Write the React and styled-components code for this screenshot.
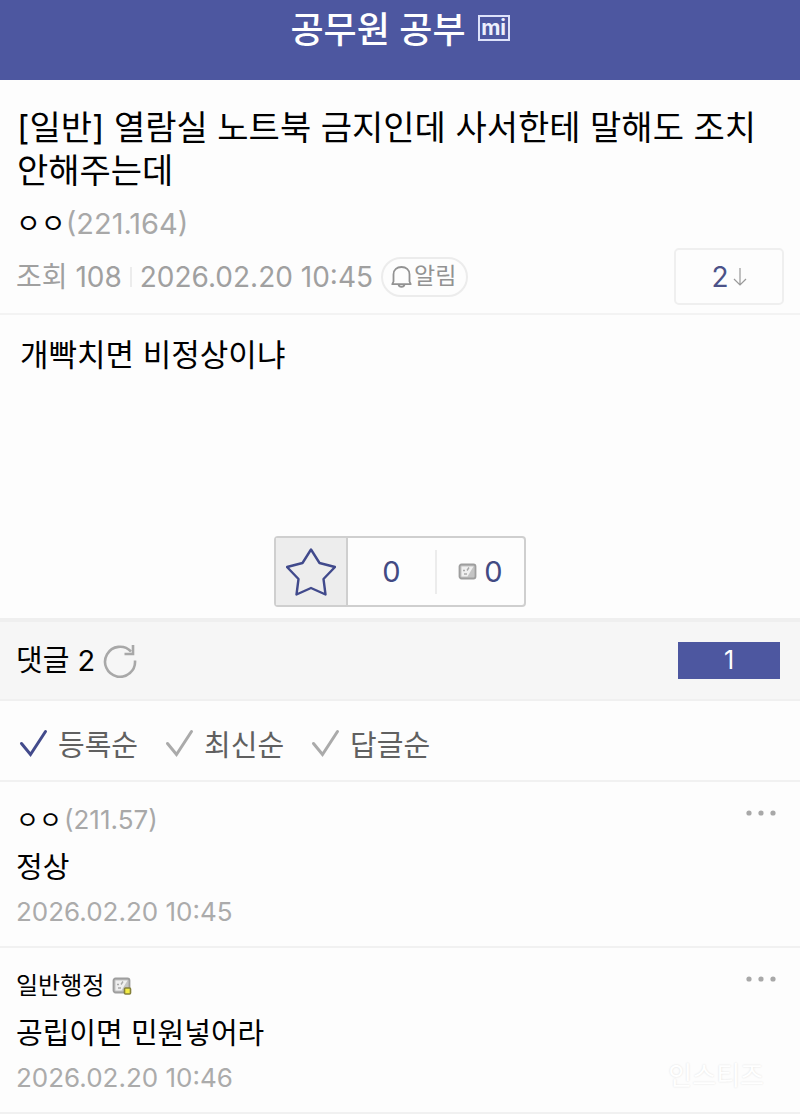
import React, {useState} from 'react'
import styled, {createGlobalStyle} from 'styled-components'

const GlobalStyle = createGlobalStyle`
  * { box-sizing: border-box; }

  body {
    margin: 0;
    background: #fdfdfd;
    color: #000;
    font-family: Inter, 'Noto Sans CJK KR', sans-serif;
  }

  button {
    margin: 0;
    padding: 0;
    border: 0;
    background: none;
    color: inherit;
    font: inherit;
    cursor: pointer;
  }

  h1, h2, p, ul { margin: 0; padding: 0; font-weight: 400; }

  a { color: inherit; text-decoration: none; }

  svg { display: block; flex: none; }
`

const Page = styled.div`
  position: relative;
  line-height: 1;
`

const TopBar = styled.header`
  display: flex;
  justify-content: center;
  align-items: center;
  gap: 12px;
  height: 80px;
  padding-bottom: 24px;
  background: #4d57a0;
  color: #fff;
`

const BoardName = styled.a`
  padding-top: 4px;
  font-size: 36px;
  font-weight: 500;
`

const MinorMark = styled.span`
  display: flex;
  justify-content: center;
  width: 32px;
  height: 26px;
  border: 2px solid #dde2fa;
  color: #eceffd;
  font-size: 21px;
  font-weight: 700;
  line-height: 22px;
`

const PostHead = styled.div`
  padding: 26px 16px 8px;
  border-bottom: 2px solid #f3f3f3;
`

const Title = styled.h1`
  padding-left: 1px;
  font-size: 34px;
  line-height: 43px;
`

const Writer = styled.div`
  display: flex;
  align-items: center;
  gap: ${p => p.$gap || 0}px;
  font-size: ${p => p.$size}px;
  line-height: 36px;
`

const PostWriter = styled(Writer)`padding: 14px 0 6px;`

const Ip = styled.span`
  color: #a8a8a8;
  font-size: ${p => p.$size}px;
`

const MetaRow = styled.div`
  display: flex;
  justify-content: space-between;
  align-items: center;
`

const Meta = styled.div`
  display: flex;
  align-items: center;
  gap: 8px;
  color: #a0a0a0;
  font-size: 28px;
`

const Bar = styled.span`
  width: 2px;
  height: ${p => p.$height}px;
  background: #ececec;
`

const AlarmButton = styled.button`
  display: flex;
  align-items: center;
  gap: 2px;
  height: 40px;
  padding: 0 10px 0 8px;
  border: 2px solid #ececec;
  border-radius: 20px;
  color: #929292;
  font-size: 23px;
`

const ReplyJump = styled.a`
  display: flex;
  justify-content: center;
  align-items: center;
  gap: 4px;
  width: 110px;
  height: 57px;
  border: 2px solid #efefef;
  border-radius: 5px;
  color: #4b5288;
  font-size: 28px;
`

const PostBody = styled.div`
  display: flex;
  flex-direction: column;
  align-items: center;
  padding: 20px 20px 11px;
`

const BodyText = styled.p`
  align-self: stretch;
  min-height: 201px;
  font-size: 31px;
  line-height: 40px;
`

const VoteBox = styled.div`
  display: flex;
  align-items: center;
  width: 252px;
  height: 71px;
  border: 2px solid #cfcfcf;
  border-radius: 4px;
  color: #424a83;
  font-size: 29px;
`

const StarButton = styled.button`
  display: flex;
  justify-content: center;
  align-items: center;
  width: 72px;
  height: 67px;
  border-right: 2px solid #cfcfcf;
  background: #ededed;
`

const VoteCount = styled.div`
  display: flex;
  flex: 1;
  justify-content: center;
  align-items: center;
  gap: 6px;
`

const CommentBar = styled.div`
  display: flex;
  justify-content: space-between;
  align-items: center;
  height: 83px;
  padding: 0 20px 0 16px;
  border-top: 4px solid #efefef;
  border-bottom: 2px solid #f0f0f0;
  background: #f6f6f6;
`

const CommentTitle = styled.div`
  display: flex;
  align-items: center;
  gap: 8px;
`

const CommentHeading = styled.h2`font-size: 29px;`

const PageButton = styled.button`
  width: 102px;
  height: 37px;
  background: #4d57a0;
  color: #fff;
  font-size: 25px;
`

const SortRow = styled.div`
  display: flex;
  align-items: center;
  gap: 26px;
  height: 81px;
  padding: 6px 18px 0;
  border-bottom: 2px solid #f1f1f1;
`

const SortButton = styled.button`
  display: flex;
  align-items: center;
  gap: 10px;
  color: #606060;
  font-size: 29px;
  line-height: 32px;

  svg { color: ${p => (p.$active ? '#434b8c' : '#aaa')}; }
`

const SortLabel = styled.span`padding-top: 4px;`

const CommentList = styled.ul`list-style: none;`

const CommentItem = styled.li`
  display: flex;
  justify-content: space-between;
  align-items: flex-start;
  padding: 20px 20px 14px 16px;
  border-bottom: 2px solid #f1f1f1;
`

const CommentText = styled.p`
  padding-top: 6px;
  font-size: 29px;
  line-height: 48px;
`

const CommentTime = styled.div`
  color: #ababab;
  font-size: 26px;
  line-height: 40px;
`

const MoreButton = styled.button`padding: 8px 4px;`

const Watermark = styled.div`
  position: absolute;
  right: 36px;
  bottom: 22px;
  color: #fff;
  font-size: 26px;
  line-height: 32px;
  text-shadow: 0 0 2px #ddd;
`

const BellIcon = () => (
  <svg width="21" height="24" viewBox="0 0 21 24" fill="none" stroke="currentColor" strokeWidth="1.8">
    <path d="M2.500 16.500V9.500C2.500 4.500 6 2 10.500 2s8 2.500 8 7.500v7l1.200 2.700H1.300z" strokeLinejoin="round" />
    <path d="M7.500 19.500c.6 3 5.400 3 6 0" />
  </svg>
)

const DownIcon = () => (
  <svg width="14" height="20" viewBox="0 0 14 20" fill="none" stroke="#999" strokeWidth="1.2">
    <path d="M7 1v17M1 12l6 6 6-6" />
  </svg>
)

const StarIcon = () => (
  <svg width="50" height="48" viewBox="0 0 50 48" fill="none" stroke="#414a8c" strokeWidth="2.4" strokeLinejoin="round">
    <path d="M25 1.5l8.500 13.500 15.500 4-11.500 12 2 15.500L25 40l-14.500 6.500 2-15.500L1 19l15.500-4z" />
  </svg>
)

const RefreshIcon = () => (
  <svg width="34" height="34" viewBox="0 0 34 34" fill="none" stroke="#a8a8a8" strokeWidth="2.6">
    <path d="M32 16.500A15 15 0 1 1 28 7.500" />
    <path d="M30 1v9h-8.500" />
  </svg>
)

const CheckIcon = () => (
  <svg width="30" height="30" viewBox="0 0 30 30" fill="none" stroke="currentColor" strokeWidth="3" strokeLinecap="round">
    <path d="M3.500 14.500l9 11L27.500 2.500" />
  </svg>
)

const DotsIcon = () => (
  <svg width="30" height="6" viewBox="0 0 30 6" fill="#a8a8a8">
    <circle cx="3" cy="3" r="2.6" />
    <circle cx="15" cy="3" r="2.6" />
    <circle cx="27" cy="3" r="2.6" />
  </svg>
)

const BlogIcon = ({badge}) => (
  <svg width="20" height="20" viewBox="0 0 20 20">
    <rect x="1.5" y="2.5" width="16" height="14" rx="2" fill="#c4c4c4" stroke="#9e9e9e" strokeWidth="1.8" />
    <path d="M3.500 4.500h12L9.500 14.500h-6z" fill="#f0f0f0" />
    <path d="M5 8.500h2M11 5.500l-2 3M6 12h3" stroke="#aaa" strokeWidth="1.4" />
    {badge && (
      <rect x="12.5" y="12" width="6" height="6" rx="1" fill="#f3ec45" stroke="#85803a" strokeWidth="1.6" />
    )}
  </svg>
)

const sorts = ['등록순', '최신순', '답글순']

const comments = [
  {name: 'ㅇㅇ', ip: '(211.57)', text: '정상', time: '2026.02.20 10:45'},
  {name: '일반행정', text: '공립이면 민원넣어라', time: '2026.02.20 10:46'},
]

const Comment = ({name, ip, text, time}) => (
  <CommentItem>
    <div>
      <Writer $size={ip ? 25 : 24} $gap={ip ? 2 : 8}>
        <span>{name}</span>
        {ip ? <Ip $size={26}>{ip}</Ip> : <BlogIcon badge />}
      </Writer>
      <CommentText>{text}</CommentText>
      <CommentTime>{time}</CommentTime>
    </div>
    <MoreButton aria-label="더보기">
      <DotsIcon />
    </MoreButton>
  </CommentItem>
)

const App = () => {
  const [sort, setSort] = useState(sorts[0])

  return (
    <Page>
      <GlobalStyle />
      <TopBar>
        <BoardName href="#">공무원 공부</BoardName>
        <MinorMark>mi</MinorMark>
      </TopBar>

      <main>
        <PostHead>
          <Title>[일반] 열람실 노트북 금지인데 사서한테 말해도 조치 안해주는데</Title>
          <PostWriter $size={27}>
            <span>ㅇㅇ</span>
            <Ip $size={29}>(221.164)</Ip>
          </PostWriter>
          <MetaRow>
            <Meta>
              <span>조회 108</span>
              <Bar $height={20} />
              <span>2026.02.20 10:45</span>
              <AlarmButton>
                <BellIcon />
                알림
              </AlarmButton>
            </Meta>
            <ReplyJump href="#comments">
              2
              <DownIcon />
            </ReplyJump>
          </MetaRow>
        </PostHead>

        <PostBody>
          <BodyText>개빡치면 비정상이냐</BodyText>
          <VoteBox>
            <StarButton aria-label="추천">
              <StarIcon />
            </StarButton>
            <VoteCount>0</VoteCount>
            <Bar $height={44} />
            <VoteCount>
              <BlogIcon />0
            </VoteCount>
          </VoteBox>
        </PostBody>

        <CommentBar id="comments">
          <CommentTitle>
            <CommentHeading>댓글 2</CommentHeading>
            <button aria-label="새로고침">
              <RefreshIcon />
            </button>
          </CommentTitle>
          <PageButton>1</PageButton>
        </CommentBar>

        <SortRow>
          {sorts.map(name => (
            <SortButton
              key={name}
              $active={name === sort}
              aria-pressed={name === sort}
              onClick={() => setSort(name)}
            >
              <CheckIcon />
              <SortLabel>{name}</SortLabel>
            </SortButton>
          ))}
        </SortRow>

        <CommentList>
          {comments.map(c => <Comment key={c.time} {...c} />)}
        </CommentList>
      </main>

      <Watermark>인스티즈</Watermark>
    </Page>
  )
}

export default App
